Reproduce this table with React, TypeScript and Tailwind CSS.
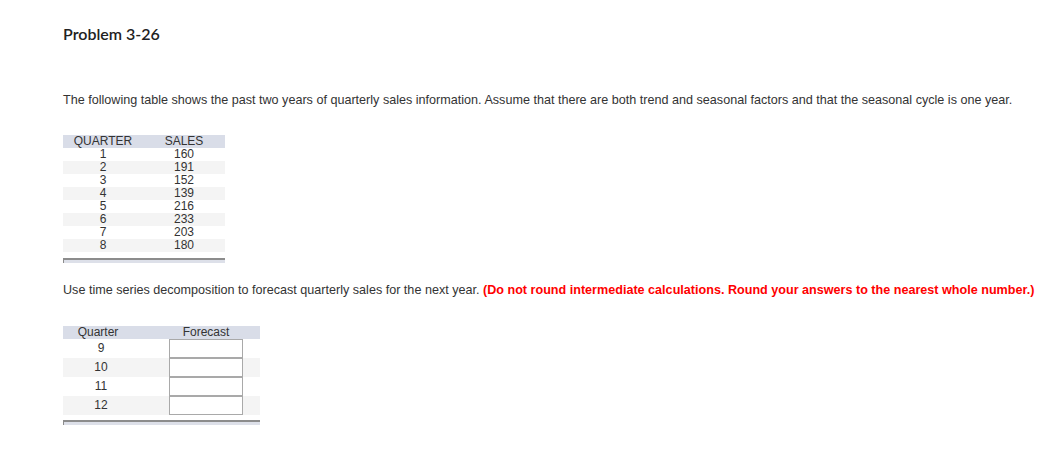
const sales = [
  [1, 160],
  [2, 191],
  [3, 152],
  [4, 139],
  [5, 216],
  [6, 233],
  [7, 203],
  [8, 180],
]

const quarters = [9, 10, 11, 12]

export default function App() {
  return (
    <div className="min-h-screen w-full bg-white pl-[63px] pt-[24px] text-[#333]">
      <h1 className="font-['Lato',sans-serif] text-[16px] leading-[20px] font-semibold text-[#222]">Problem 3-26</h1>

      <p className="mt-[48px] whitespace-nowrap font-['Liberation_Sans',Arial,sans-serif] text-[12.6px] leading-[16px]">
        The following table shows the past two years of quarterly sales information. Assume that there are both trend and seasonal factors and that the seasonal cycle is one year.
      </p>

      <div className="mt-[27px] w-[162px] font-['Liberation_Sans',Arial,sans-serif] text-[12px] leading-[13px]">
        <div className="flex bg-[#d9dde8]">
          <div className="w-[80px] text-center">QUARTER</div>
          <div className="w-[82px] text-center">SALES</div>
        </div>
        {sales.map(([q, s], i) => (
          <div key={q} className={`flex ${i % 2 === 1 ? 'bg-[#f4f4f4]' : 'bg-white'}`}>
            <div className="w-[80px] text-center">{q}</div>
            <div className="w-[82px] text-center">{s}</div>
          </div>
        ))}
        <div className="mt-[6px] h-[5px] border-t-2 border-l border-[#8c8c8c] bg-[#dde0e9]" />
      </div>

      <p className="mt-[19px] whitespace-nowrap font-['Liberation_Sans',Arial,sans-serif] text-[12.6px] leading-[16px]">
        Use time series decomposition to forecast quarterly sales for the next year.{' '}
        <span className="font-bold text-[#ff0000]">
          (Do not round intermediate calculations. Round your answers to the nearest whole number.)
        </span>
      </p>

      <div className="mt-[28px] w-[197px] font-['Liberation_Sans',Arial,sans-serif] text-[12px] leading-[13px]">
        <div className="flex bg-[#d9dde8]">
          <div className="w-[70px] text-center">Quarter</div>
          <div className="ml-[36px] w-[74px] text-center">Forecast</div>
        </div>
        {quarters.map((q, i) => (
          <div key={q} className={`flex h-[19px] items-center ${i % 2 === 1 ? 'bg-[#f4f4f4]' : 'bg-white'}`}>
            <div className="w-[76px] text-center">{q}</div>
            <input
              type="text"
              className="ml-[30px] h-[19px] w-[74px] border border-[#a9a9a9] bg-white px-1 text-[12px] outline-none"
            />
          </div>
        ))}
        <div className="mt-[5px] h-[5px] border-t-2 border-l border-[#8c8c8c] bg-[#dde0e9]" />
      </div>
    </div>
  )
}
